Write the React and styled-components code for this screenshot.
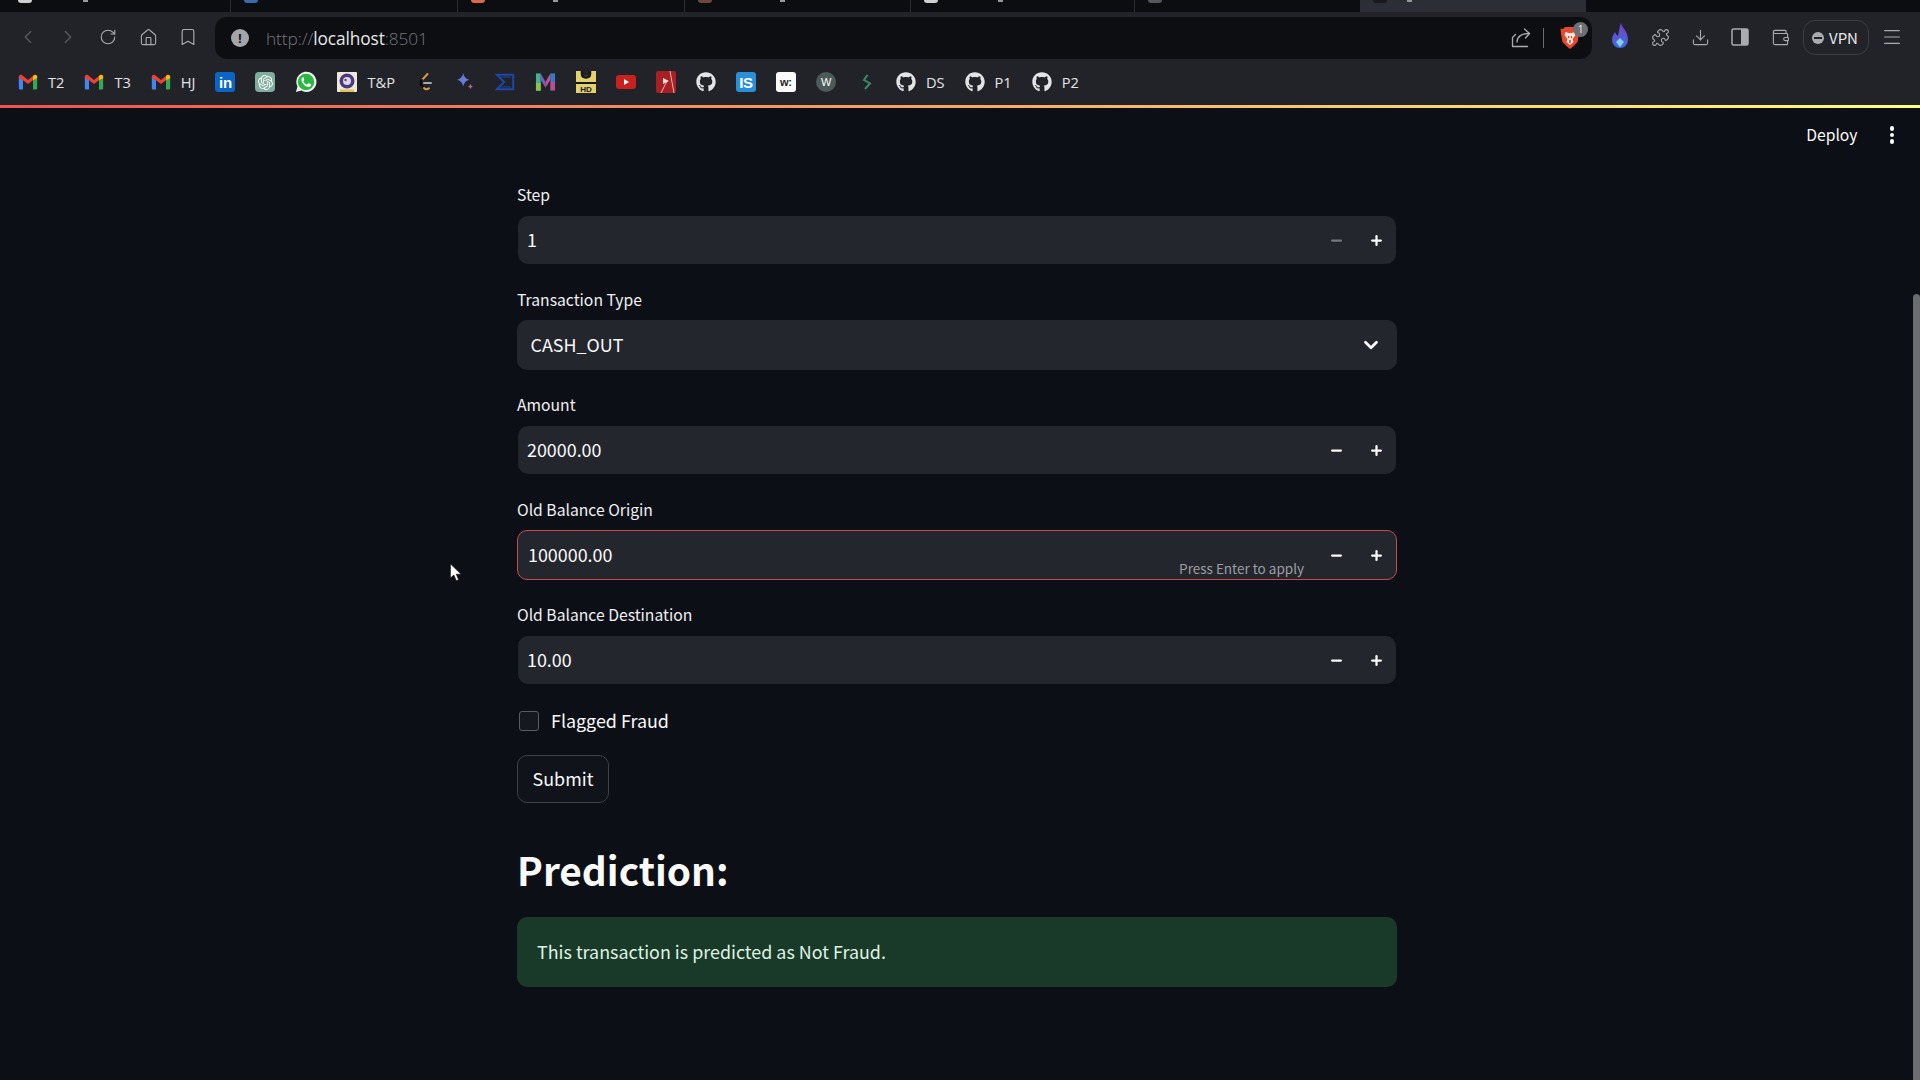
import styled, { createGlobalStyle } from "styled-components";
import { ChevronLeft, ChevronRight, RotateCw, Home, Bookmark, Puzzle, Download, Wallet, Menu, Minus, Plus, ChevronDown } from "lucide-react";
import { FaGithub } from "react-icons/fa";
import { SiOpenai } from "react-icons/si";

const uiFont = `"Noto Sans CJK SC", "Noto Sans", sans-serif`;

const GlobalStyle = createGlobalStyle`
  html, body {
    margin: 0;
    padding: 0;
    background: #0c0f16;
    overflow: hidden;
  }
  * { box-sizing: border-box; }
`;

const Screen = styled.div`
  position: relative;
  width: 1920px;
  height: 1080px;
  overflow: hidden;
  background: #0c0f16;
  font-family: ${uiFont};
  color: #fafafa;
`;

// tab strip, only the bottom of the tabs is on screen
const TabStrip = styled.div`
  display: flex;
  height: 12px;
  padding-left: 5px;
  background: #0b0d11;
`;

const Tab = styled.div`
  display: flex;
  flex-shrink: 0;
  width: ${(p) => p.$width}px;
  padding-left: 13px;
  overflow: hidden;
  background: ${(p) => (p.$active ? "#2c2e36" : "transparent")};
  border-right: ${(p) => (p.$plain ? "0" : "1px solid #2b2d33")};
`;

const TabIcon = styled.div`
  width: 14px;
  height: 3px;
  border-radius: 0 0 5px 5px;
  background: ${(p) => p.$color};
`;

const TabTitle = styled.div`
  width: 5px;
  height: 2px;
  margin-left: ${(p) => p.$gap}px;
  background: #98989b;
`;

const Toolbar = styled.div`
  display: flex;
  height: 47px;
  padding: 5px 7px 0 8px;
  background: #212329;
`;

const NavButton = styled.div`
  display: flex;
  align-items: center;
  justify-content: center;
  width: 40px;
  height: 40px;
  flex-shrink: 0;
  color: ${(p) => (p.$dim ? "#5a5c62" : "#a9abb0")};
`;

const AddressBar = styled.div`
  display: flex;
  align-items: center;
  width: 1377px;
  height: 42px;
  margin-left: 7px;
  margin-right: 8px;
  padding: 0 10px 0 16px;
  border-radius: 12px;
  background: #0c0e12;
`;

const InfoIcon = styled.div`
  display: flex;
  align-items: center;
  justify-content: center;
  width: 18px;
  height: 18px;
  border-radius: 50%;
  background: #a3a5a8;
  color: #0c0e12;
  font: 700 13px "Liberation Sans", sans-serif;
`;

const Url = styled.div`
  margin-left: 17px;
  font: 300 17.3px "Open Sans", sans-serif;
  letter-spacing: -0.1px;
  color: #75777c;
`;

const Host = styled.span`
  color: #e8e8e8;
  font-weight: 400;
`;

const AddressActions = styled.div`
  display: flex;
  align-items: center;
  margin-left: auto;
  color: #a9abb0;
`;

const AddressDivider = styled.div`
  width: 1px;
  height: 20px;
  margin: 0 14px 0 12px;
  background: #6a6c70;
`;

const BraveButton = styled.div`
  position: relative;
  display: flex;
  justify-content: center;
  width: 24px;
`;

const CountBadge = styled.span`
  position: absolute;
  top: -4px;
  right: -6px;
  width: 15px;
  height: 15px;
  border-radius: 50%;
  background: #6d6f75;
  color: #f0f0f0;
  font: 400 10px/15px "Open Sans", sans-serif;
  text-align: center;
`;

const VpnButton = styled.div`
  display: flex;
  align-items: center;
  gap: 5px;
  width: 66px;
  height: 35px;
  margin: 3px 3px 0 3px;
  padding-left: 8px;
  border: 1px solid #3b3d45;
  border-radius: 12px;
  font: 400 15px ${uiFont};
  color: #e6e6e6;
`;

const VpnDot = styled.span`
  display: flex;
  align-items: center;
  justify-content: center;
  width: 12px;
  height: 12px;
  border-radius: 50%;
  background: #a9abb0;
  &::after {
    content: "";
    width: 8px;
    height: 2px;
    background: #212329;
  }
`;

const BookmarkBar = styled.div`
  display: flex;
  align-items: center;
  gap: 20px;
  height: 46px;
  padding: 0 0 0 18px;
  background: #212329;
`;

const BookmarkItem = styled.div`
  display: flex;
  align-items: center;
  gap: 10px;
  font: 400 14.6px "Open Sans", sans-serif;
  color: #e4e4e6;
`;

const FavTile = styled.span`
  display: flex;
  align-items: center;
  justify-content: center;
  width: 20px;
  height: 20px;
  flex-shrink: 0;
  overflow: hidden;
  border-radius: ${(p) => p.$radius || "3px"};
  background: ${(p) => p.$bg};
  color: ${(p) => p.$color || "#fff"};
  font: ${(p) => p.$weight || 700} ${(p) => p.$size || 12}px "Liberation Sans", sans-serif;
  letter-spacing: -0.3px;
`;

const Decoration = styled.div`
  height: 3px;
  background: linear-gradient(90deg, #ef5350, #fffd80);
`;

const AppHeader = styled.header`
  display: flex;
  align-items: center;
  justify-content: flex-end;
  gap: 32px;
  height: 54px;
  padding-right: 26px;
  font-size: 15.7px;
`;

const DeployText = styled.span`
  padding-bottom: 2px;
`;

const MoreDots = styled.div`
  display: flex;
  flex-direction: column;
  gap: 2px;
`;

const Dot = styled.span`
  width: 4.5px;
  height: 4.5px;
  border-radius: 50%;
  background: #fafafa;
`;

const Main = styled.main`
  display: flex;
  flex-direction: column;
  width: 880px;
  margin-left: 517px;
  padding-top: 21px;
`;

const Form = styled.div`
  display: flex;
  flex-direction: column;
  gap: 23px;
`;

const Field = styled.div`
  display: flex;
  flex-direction: column;
`;

const Label = styled.label`
  height: 24px;
  margin-bottom: 8px;
  font-size: 15.7px;
  line-height: 24px;
  color: #f0f0f2;
`;

const ControlSlot = styled.div`
  display: flex;
  align-items: center;
  height: 50px;
`;

const ControlText = styled.span`
  padding-bottom: 2px;
`;

const NumberBox = styled.div`
  position: relative;
  display: flex;
  align-items: center;
  width: 100%;
  height: ${(p) => (p.$focused ? "50px" : "48px")};
  margin: ${(p) => (p.$focused ? "0" : "0 1px")};
  padding-left: ${(p) => (p.$focused ? "10px" : "9px")};
  border-radius: 10px;
  background: #24262e;
  border: ${(p) => (p.$focused ? "1.5px solid #c64a4f" : "0")};
  font-size: 17.9px;
`;

const StepButton = styled.span`
  display: flex;
  align-items: center;
  justify-content: center;
  width: 40px;
  height: 40px;
  color: ${(p) => (p.$disabled ? "#77787d" : "#fafafa")};
`;

const Steppers = styled.div`
  display: flex;
  margin-left: auto;
`;

const EnterHint = styled.span`
  position: absolute;
  right: 92px;
  bottom: 1px;
  font-size: 13.5px;
  line-height: 20px;
  color: #9c9da2;
`;

const SelectBox = styled.div`
  display: flex;
  align-items: center;
  justify-content: space-between;
  width: 100%;
  height: 50px;
  padding: 0 15px 0 13.5px;
  border-radius: 10px;
  background: #24262e;
  font-size: 17.9px;
`;

const CheckRow = styled.div`
  display: flex;
  align-items: center;
  gap: 12px;
  height: 24px;
  margin-top: 24px;
  padding-left: 2px;
  font-size: 17.9px;
`;

const CheckBox = styled.span`
  width: 20px;
  height: 20px;
  border: 1px solid #5a5c63;
  border-radius: 3px;
  background: #15181f;
`;

const SubmitButton = styled.button`
  align-self: flex-start;
  width: 92px;
  height: 48px;
  margin-top: 22px;
  padding: 0 0 2px 0;
  border: 1px solid #3f4148;
  border-radius: 10px;
  background: #10131a;
  color: #fafafa;
  font: 400 17.9px ${uiFont};
`;

const Heading = styled.h2`
  margin: 34px 0 0 0;
  height: 80px;
  font-size: 38.8px;
  font-weight: 700;
  line-height: 64px;
  color: #fafafa;
`;

const SuccessAlert = styled.div`
  display: flex;
  align-items: center;
  height: 70px;
  padding: 0 0 2px 20px;
  border-radius: 10px;
  background: #193a28;
  color: #dff3e3;
  font-size: 17.9px;
`;

const Scrollbar = styled.div`
  position: absolute;
  top: 294px;
  right: 0;
  bottom: 0;
  width: 7px;
  border-radius: 4px 4px 0 0;
  background: #6a6c72;
`;

const Cursor = styled.svg`
  position: absolute;
  left: 449px;
  top: 563px;
`;

const Gmail = () => (
  <svg width="20" height="20" viewBox="0 0 24 24">
    <path fill="#4285f4" d="M1 21V6l5 4v11H2.5A1.5 1.5 0 0 1 1 19.5z" />
    <path fill="#34a853" d="M23 21V6l-5 4v11h3.5a1.5 1.5 0 0 0 1.5-1.5z" />
    <path fill="#ea4335" d="M1 7.5V5.5C1 3.6 3.2 2.6 4.6 3.7L12 9.5l7.4-5.8L18 10l-6 4.5L6 10z" />
    <path fill="#fbbc04" d="M18 10V4.8l1.4-1.1C20.800 2.600 23 3.600 23 5.500v2z" />
  </svg>
);

const WhatsApp = () => (
  <svg width="22" height="22" viewBox="0 0 24 24">
    <path fill="#f2f2f2" d="M1 23l1.700-6A11 11 0 1 1 7 21.400z" />
    <circle cx="12" cy="12" r="9" fill="#2bb741" />
    <path fill="#fff" d="M8.700 6.800c-.8.300-2 1.700-1.500 3.800.6 2.700 3.500 5.900 6.400 6.700 2 .5 3.500-.5 3.900-1.700.2-.7.100-1-.1-1.100l-2.500-1.200c-.3-.1-.5 0-.7.200l-.9 1.100c-.2.200-.4.200-.7.100-1.400-.6-2.700-1.800-3.400-3.100-.1-.3-.1-.4.100-.6l.7-.9c.1-.2.100-.4 0-.6L9.600 7.200c-.2-.4-.5-.5-.9-.4z" />
  </svg>
);

const CollegeSeal = () => (
  <FavTile $bg="#efe9dc" $radius="1px">
    <svg width="20" height="20" viewBox="0 0 20 20">
      <circle cx="10" cy="9" r="7.500" fill="#4a3a80" />
      <circle cx="10" cy="9" r="4" fill="#dcd8e8" />
      <circle cx="8.500" cy="8" r="1.200" fill="#6a3a58" />
      <rect x="3" y="17.500" width="14" height="2.500" fill="#e4c25a" />
    </svg>
  </FavTile>
);

const LeetCode = () => (
  <svg width="20" height="20" viewBox="0 0 20 20" fill="none" strokeWidth="2" strokeLinecap="round">
    <path stroke="#d89a3a" d="M12.500 2L7 8" />
    <path stroke="#08090b" d="M7 8c-2 2-2 4 0 6l2 2" />
    <path stroke="#d89a3a" d="M9 16c1.500 1.500 3.500 1.500 5 .3" />
    <path stroke="#a5a7aa" d="M9 11h7" />
  </svg>
);

const GeminiStar = () => (
  <svg width="20" height="22" viewBox="0 0 22 22">
    <path fill="#5b7bd8" d="M9 1c.8 4 2.700 6.200 6.500 7.500C11.700 9.800 9.800 12 9 16c-.8-4-2.700-6.200-6.500-7.500C6.300 7.200 8.200 5 9 1z" />
    <path fill="#a867c8" d="M9 5c.5 2 1.500 3 3 3.500-1.500.5-2.500 1.500-3 3.500z" />
    <path fill="#c0689c" d="M17 13c.3 1.800 1 2.600 3 3-2 .4-2.700 1.200-3 3-.3-1.800-1-2.600-3-3 2-.4 2.700-1.200 3-3z" />
  </svg>
);

const SigmaMark = () => (
  <svg width="20" height="22" viewBox="0 0 22 22" fill="none" stroke="#1f46a8" strokeWidth="2.200">
    <path d="M2 3h18v16H2l8-8z" />
    <path d="M6 5.500h11M6 16.500h11" strokeWidth="1" />
  </svg>
);

const ColorM = () => (
  <svg width="21" height="22" viewBox="0 0 22 22">
    <path fill="#3fb48c" d="M1 2h5v18H1z" />
    <path fill="#7a5bc8" d="M6 2l5 9v6L6 9z" />
    <path fill="#c24f92" d="M16 2l-5 9v6l5-8z" />
    <path fill="#3a78c8" d="M16 2h5v9h-5z" />
    <path fill="#b84e8c" d="M16 11h5v9h-5z" />
    <path fill="#8fc04a" d="M1 12h5v8H1z" />
  </svg>
);

const UhdMark = () => (
  <svg width="20" height="22" viewBox="0 0 20 22">
    <path fill="#e3d16b" d="M0 0h5v2c0 4 10 4 10 0V0h5v22H0z" />
    <path fill="none" stroke="#15171b" strokeWidth="2.500" d="M6 0v3c0 4.500 8 4.500 8 0V0" />
    <rect x="0" y="11" width="20" height="2" fill="#15171b" />
    <text x="10" y="20.500" fontSize="8" fontWeight="700" fontFamily="Liberation Sans, sans-serif" textAnchor="middle" fill="#15171b">HD</text>
  </svg>
);

const YouTube = () => (
  <svg width="20" height="20" viewBox="0 0 20 20">
    <rect y="3" width="20" height="14" rx="3" fill="#c9211e" />
    <path fill="#fff" d="M8 7l5 3-5 3z" />
  </svg>
);

const RedPlay = () => (
  <svg width="20" height="22" viewBox="0 0 20 22">
    <rect width="20" height="22" rx="2" fill="#a81f24" />
    <path stroke="#e8b4b0" strokeWidth="1" d="M14 0l4 22M5 22l6-12" />
    <path fill="#f3e4e0" d="M7 7l6 3-6 3z" />
  </svg>
);

const GreenMark = () => (
  <svg width="20" height="20" viewBox="0 0 20 20" fill="none" stroke="#3c8a68" strokeWidth="2">
    <path d="M11.500 3L8 8l6 3.500L9 17" />
  </svg>
);

const ShareIcon = () => (
  <svg width="20" height="20" viewBox="0 0 20 20" fill="none" stroke="currentColor" strokeWidth="1.300" strokeLinecap="round" strokeLinejoin="round">
    <path d="M4.500 6.500L1.500 9.500v9h15" />
    <path d="M6 14c0-5 4-8.500 12-8.500" />
    <path d="M13.500 1l5 4.500-4 4.500" />
  </svg>
);

const BraveShield = () => (
  <svg width="20" height="24" viewBox="0 0 20 24">
    <path fill="#e5482f" d="M5 1h10l2 2 2.500-.5L19 8l-1.500 8-5 5L10 23l-2.500-2-5-5L1 8 .5 2.500 3 3z" />
    <path fill="#f6e8dc" d="M5.500 6l3 1h3l3-1 1 3-3 4 1 3-3.500 3-3.500-3 1-3-3-4z" />
    <path fill="#e5482f" d="M8 10h1.300v2H8zM10.700 10H12v2h-1.300zM9.200 14h1.600v3H9.200z" />
  </svg>
);

const SidebarIcon = () => (
  <svg width="18" height="18" viewBox="0 0 18 18">
    <rect x="1" y="1" width="16" height="16" rx="1.500" fill="none" stroke="#a9abb0" strokeWidth="1.500" />
    <rect x="10" y="1" width="7" height="16" fill="#a9abb0" />
  </svg>
);

const FlameIcon = () => (
  <svg width="20" height="30" viewBox="0 0 20 30">
    <defs>
      <linearGradient id="flame" x1="0" y1="0" x2="0" y2="1">
        <stop offset="0" stopColor="#7a3fc8" />
        <stop offset="1" stopColor="#3b6fe0" />
      </linearGradient>
    </defs>
    <path fill="url(#flame)" d="M11 1c1 5 7 8 7 17a8 8 0 0 1-16 0c0-4 2-6 3-8 1 2 1.500 3 3 4 1-4 1-8 3-13z" />
    <path fill="#7fd0e8" d="M10 16l4 4-4 5-4-5z" />
  </svg>
);

const CursorIcon = () => (
  <Cursor width="14" height="19" viewBox="0 0 16 22">
    <path fill="#fff" stroke="#111" strokeWidth="0.800" d="M1.500 1v16.500l4-3.500 2.800 6.500 2.800-1.200-2.800-6.300H14z" />
  </Cursor>
);

const tabs = [
  { width: 226, icon: "#cfcfd0", titleGap: 51 },
  { width: 227, icon: "#3a6aa8" },
  { width: 226.5, icon: "#d8694a", titleGap: 68 },
  { width: 226, icon: "#6a4a38", titleGap: 68 },
  { width: 224.5, icon: "#cfcfd0", titleGap: 60 },
  { width: 225, icon: "#55575c", plain: true },
  { width: 226, icon: "#17191e", titleGap: 20, active: true, plain: true },
];

const bookmarks = [
  { icon: <Gmail />, label: "T2" },
  { icon: <Gmail />, label: "T3" },
  { icon: <Gmail />, label: "HJ" },
  { icon: <FavTile $bg="#0a66c2" $size={15}>in</FavTile> },
  { icon: <FavTile $bg="#7fae9e" $radius="4px"><SiOpenai size={15} /></FavTile> },
  { icon: <WhatsApp /> },
  { icon: <CollegeSeal />, label: "T&P" },
  { icon: <LeetCode /> },
  { icon: <GeminiStar /> },
  { icon: <SigmaMark /> },
  { icon: <ColorM /> },
  { icon: <UhdMark /> },
  { icon: <YouTube /> },
  { icon: <RedPlay /> },
  { icon: <FaGithub size={20} /> },
  { icon: <FavTile $bg="#2b8fd8" $size={15}>IS</FavTile> },
  { icon: <FavTile $bg="#fafafa" $color="#222" $size={11}>w:</FavTile> },
  { icon: <FavTile $bg="#4c5a58" $radius="50%" $size={11} $weight={400}>W</FavTile> },
  { icon: <GreenMark /> },
  { icon: <FaGithub size={20} />, label: "DS" },
  { icon: <FaGithub size={20} />, label: "P1" },
  { icon: <FaGithub size={20} />, label: "P2" },
];

const NumberField = ({ label, value, disabledMinus, focused }) => (
  <Field>
    <Label>{label}</Label>
    <ControlSlot>
      <NumberBox $focused={focused}>
        <ControlText>{value}</ControlText>
        {focused && <EnterHint>Press Enter to apply</EnterHint>}
        <Steppers>
          <StepButton $disabled={disabledMinus}><Minus size={15} strokeWidth={3.6} /></StepButton>
          <StepButton><Plus size={15} strokeWidth={3.6} /></StepButton>
        </Steppers>
      </NumberBox>
    </ControlSlot>
  </Field>
);

export default function App() {
  return (
    <Screen>
      <GlobalStyle />
      <TabStrip>
        {tabs.map((tab, i) => (
          <Tab key={i} $width={tab.width} $active={tab.active} $plain={tab.plain}>
            <TabIcon $color={tab.icon} />
            {tab.titleGap && <TabTitle $gap={tab.titleGap} />}
          </Tab>
        ))}
      </TabStrip>
      <Toolbar>
        <NavButton $dim><ChevronLeft size={22} strokeWidth={1.3} /></NavButton>
        <NavButton $dim><ChevronRight size={22} strokeWidth={1.3} /></NavButton>
        <NavButton><RotateCw size={18} strokeWidth={1.5} /></NavButton>
        <NavButton><Home size={19} strokeWidth={1.4} /></NavButton>
        <NavButton><Bookmark size={20} strokeWidth={1.4} /></NavButton>
        <AddressBar>
          <InfoIcon>!</InfoIcon>
          <Url>http://<Host>localhost</Host>:8501</Url>
          <AddressActions>
            <ShareIcon />
            <AddressDivider />
            <BraveButton>
              <BraveShield />
              <CountBadge>1</CountBadge>
            </BraveButton>
          </AddressActions>
        </AddressBar>
        <NavButton><FlameIcon /></NavButton>
        <NavButton><Puzzle size={19} strokeWidth={1.4} /></NavButton>
        <NavButton><Download size={19} strokeWidth={1.4} /></NavButton>
        <NavButton><SidebarIcon /></NavButton>
        <NavButton><Wallet size={19} strokeWidth={1.4} /></NavButton>
        <VpnButton><VpnDot />VPN</VpnButton>
        <NavButton><Menu size={22} strokeWidth={1.3} /></NavButton>
      </Toolbar>
      <BookmarkBar>
        {bookmarks.map((b, i) => (
          <BookmarkItem key={i}>
            {b.icon}
            {b.label && <span>{b.label}</span>}
          </BookmarkItem>
        ))}
      </BookmarkBar>
      <Decoration />
      <AppHeader>
        <DeployText>Deploy</DeployText>
        <MoreDots><Dot /><Dot /><Dot /></MoreDots>
      </AppHeader>
      <Main>
        <Form>
          <NumberField label="Step" value="1" disabledMinus />
          <Field>
            <Label>Transaction Type</Label>
            <ControlSlot>
              <SelectBox>
                <ControlText>CASH_OUT</ControlText>
                <ChevronDown size={22} strokeWidth={3} />
              </SelectBox>
            </ControlSlot>
          </Field>
          <NumberField label="Amount" value="20000.00" />
          <NumberField label="Old Balance Origin" value="100000.00" focused />
          <NumberField label="Old Balance Destination" value="10.00" />
        </Form>
        <CheckRow>
          <CheckBox />
          <ControlText>Flagged Fraud</ControlText>
        </CheckRow>
        <SubmitButton>Submit</SubmitButton>
        <Heading>Prediction:</Heading>
        <SuccessAlert>This transaction is predicted as Not Fraud.</SuccessAlert>
      </Main>
      <Scrollbar />
      <CursorIcon />
    </Screen>
  );
}
